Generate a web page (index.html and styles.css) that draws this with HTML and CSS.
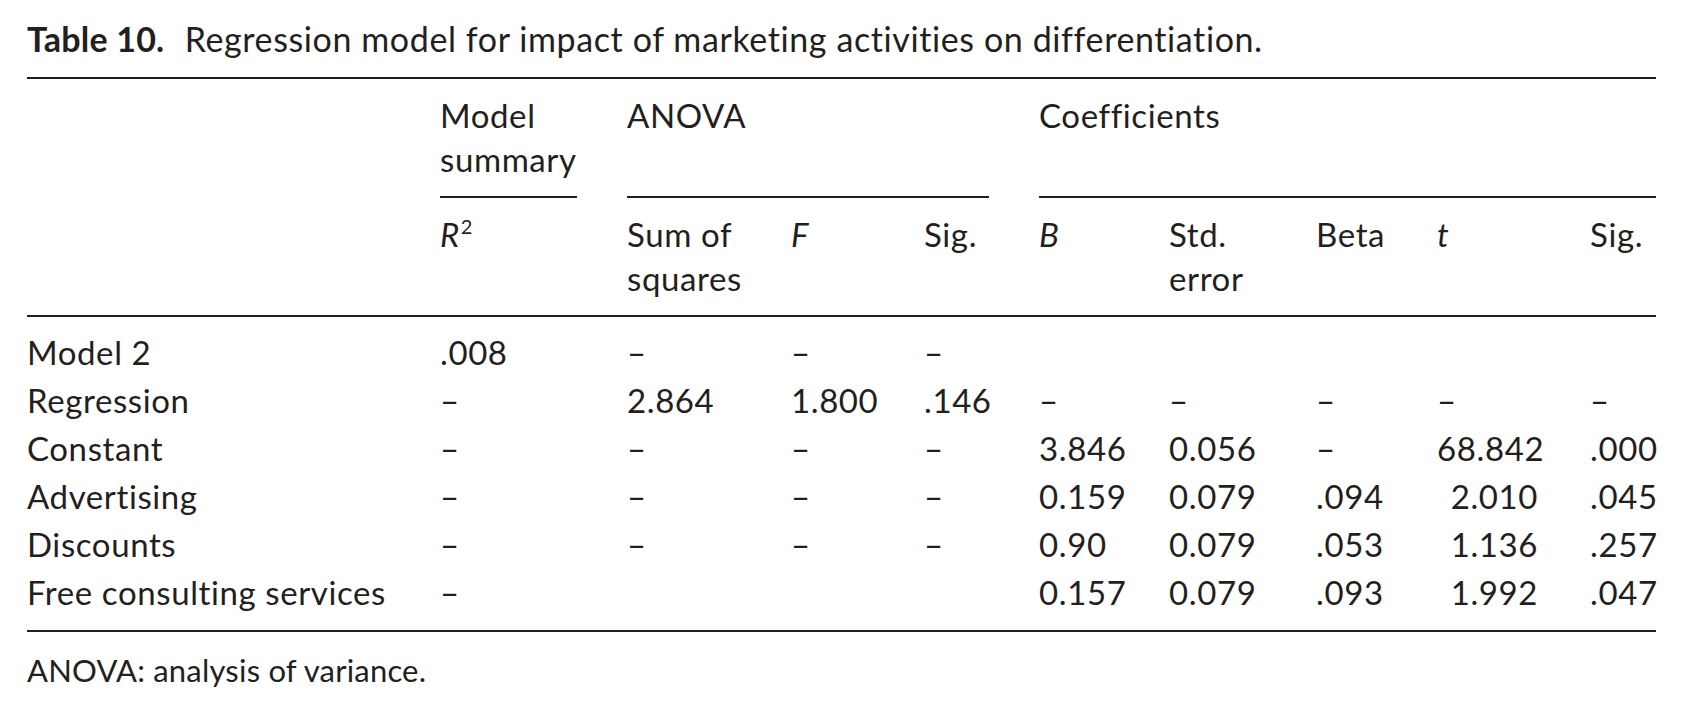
FILE: index.html
```html
<!DOCTYPE html>
<html lang="en">
<head>
<meta charset="utf-8">
<title>Table 10</title>
<link rel="stylesheet" href="styles.css">
</head>
<body>
<div class="page">
  <p class="caption"><b class="lbl">Table 10.</b> Regression model for impact of marketing activities on differentiation.</p>
  <table class="reg">
    <colgroup>
      <col class="c0"><col class="c1"><col class="c2"><col class="c3"><col class="c4">
      <col class="c5"><col class="c6"><col class="c7"><col class="c8"><col class="c9">
    </colgroup>
    <thead>
      <tr class="groups">
        <th></th>
        <th><div class="grp gap">Model<br>summary</div></th>
        <th colspan="3"><div class="grp gap">ANOVA</div></th>
        <th colspan="5"><div class="grp">Coefficients</div></th>
      </tr>
      <tr class="cols">
        <th></th>
        <th><i>R</i><sup>2</sup></th>
        <th>Sum of<br>squares</th>
        <th><i>F</i></th>
        <th>Sig.</th>
        <th><i>B</i></th>
        <th>Std.<br>error</th>
        <th>Beta</th>
        <th><i>t</i></th>
        <th>Sig.</th>
      </tr>
    </thead>
    <tbody>
      <tr>
        <td>Model 2</td><td>.008</td><td>–</td><td>–</td><td>–</td>
        <td></td><td></td><td></td><td></td><td></td>
      </tr>
      <tr>
        <td>Regression</td><td>–</td><td>2.864</td><td>1.800</td><td>.146</td>
        <td>–</td><td>–</td><td>–</td><td>–</td><td>–</td>
      </tr>
      <tr>
        <td>Constant</td><td>–</td><td>–</td><td>–</td><td>–</td>
        <td>3.846</td><td>0.056</td><td>–</td><td class="tnum">68.842</td><td>.000</td>
      </tr>
      <tr>
        <td>Advertising</td><td>–</td><td>–</td><td>–</td><td>–</td>
        <td>0.159</td><td>0.079</td><td>.094</td><td class="tnum">2.010</td><td>.045</td>
      </tr>
      <tr>
        <td>Discounts</td><td>–</td><td>–</td><td>–</td><td>–</td>
        <td>0.90</td><td>0.079</td><td>.053</td><td class="tnum">1.136</td><td>.257</td>
      </tr>
      <tr>
        <td>Free consulting services</td><td>–</td><td></td><td></td><td></td>
        <td>0.157</td><td>0.079</td><td>.093</td><td class="tnum">1.992</td><td>.047</td>
      </tr>
    </tbody>
  </table>
  <p class="note">ANOVA: analysis of variance.</p>
</div>
</body>
</html>
```

FILE: styles.css
```css
html, body {
  margin: 0;
  padding: 0;
  background: #ffffff;
}

body {
  font-family: Lato, "Open Sans", "Noto Sans", sans-serif;
  color: #231f20;
}

.page {
  padding: 19px 0 0 27px;
  width: 1629px;
}

.caption {
  margin: 0;
  font-size: 34px;
  line-height: 40px;
  letter-spacing: 0.6px;
  white-space: nowrap;
}

.caption .lbl {
  font-weight: 700;
  letter-spacing: 0.2px;
  margin-right: 11px;
}

.reg {
  margin-top: 18px;
  width: 1629px;
  table-layout: fixed;
  border-collapse: collapse;
  font-size: 33px;
  letter-spacing: 0.6px;
}

.c0 { width: 413px; }
.c1 { width: 187px; }
.c2 { width: 164px; }
.c3 { width: 133px; }
.c4 { width: 115px; }
.c5 { width: 130px; }
.c6 { width: 147px; }
.c7 { width: 121px; }
.c8 { width: 153px; }
.c9 { width: 66px; }

.reg th,
.reg td {
  padding: 0;
  text-align: left;
  vertical-align: top;
  font-weight: 400;
  white-space: nowrap;
}

.reg thead th {
  line-height: 44px;
}

.groups th {
  border-top: 2px solid #231f20;
  padding-top: 14px;
}

.grp {
  min-height: 88px;
  padding-bottom: 15px;
  border-bottom: 2px solid #231f20;
}

.grp.gap {
  margin-right: 50px;
}

.cols th {
  padding-top: 14px;
  padding-bottom: 15px;
  border-bottom: 2px solid #231f20;
}

.cols sup {
  font-size: 20px;
  line-height: 0;
  vertical-align: 13px;
  margin-left: 1px;
}

.reg tbody td {
  line-height: 48px;
}

.reg tbody tr:first-child td {
  padding-top: 11px;
}

.reg tbody tr:last-child td {
  padding-bottom: 14px;
  border-bottom: 2px solid #231f20;
}

.reg td.tnum {
  text-align: right;
  padding-right: 52px;
}

.note {
  margin: 18px 0 0;
  font-size: 31px;
  line-height: 40px;
  letter-spacing: 0.2px;
}
```
